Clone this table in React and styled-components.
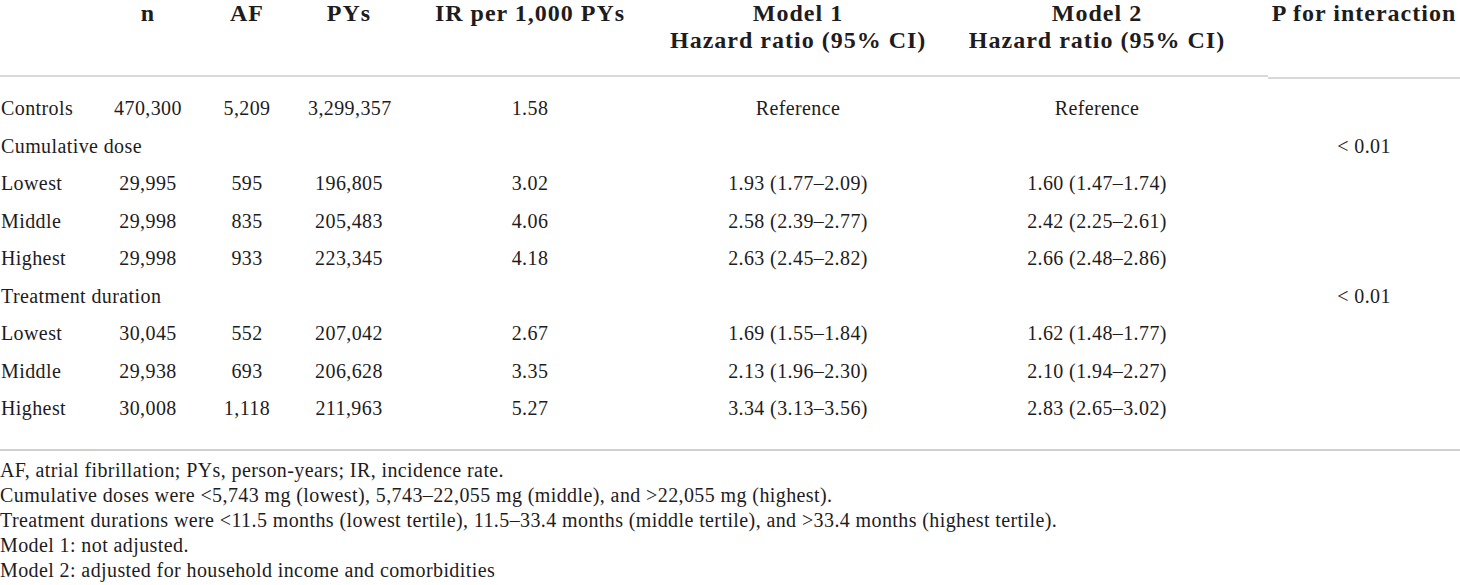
import React from 'react';
import styled, { createGlobalStyle } from 'styled-components';

const GlobalStyle = createGlobalStyle`
  html, body {
    margin: 0;
    padding: 0;
    background: #ffffff;
    overflow: hidden;
  }
  body {
    font-family: "Liberation Serif", "Times New Roman", serif;
    color: #1e1c1d;
  }
`

const COLS = '110px 76px 122px 82px 280px 256px 342px 192px';

const Table = styled.div`
  width: 1460px;
`
const HeadRow = styled.div`
  display: grid;
  grid-template-columns: ${COLS};
  height: 78px;
`
const HeadCell = styled.div`
  font-weight: 700;
  font-size: 24px;
  line-height: 27px;
  letter-spacing: 1px;
  text-align: center;
  white-space: nowrap;
  border-bottom: 2px solid #d9d9d9;
  margin-bottom: ${(p) => (p.$drop ? '-1px' : '1px')};
`
const Body = styled.div`
  padding: 12px 0 21px;
  border-bottom: 2px solid #cfcfcf;
`
const Row = styled.div`
  display: grid;
  grid-template-columns: ${COLS};
  height: 37.5px;
  align-items: center;
  font-size: 20px;
  letter-spacing: 0.4px;
`
const Label = styled.div`
  padding-left: 1px;
  white-space: nowrap;
  grid-column: ${(p) => (p.$wide ? '1 / 8' : 'auto')};
`
const Cell = styled.div`
  text-align: center;
  white-space: nowrap;
`
const Notes = styled.div`
  padding-top: 7px;
  font-size: 20px;
  line-height: 25.2px;
  letter-spacing: 0.4px;
`
const Note = styled.div`
  white-space: nowrap;
`

const rows = [
  { label: 'Controls', v: ['470,300', '5,209', '3,299,357', '1.58', 'Reference', 'Reference', ''] },
  { label: 'Cumulative dose', p: '< 0.01' },
  { label: 'Lowest', v: ['29,995', '595', '196,805', '3.02', '1.93 (1.77–2.09)', '1.60 (1.47–1.74)', ''] },
  { label: 'Middle', v: ['29,998', '835', '205,483', '4.06', '2.58 (2.39–2.77)', '2.42 (2.25–2.61)', ''] },
  { label: 'Highest', v: ['29,998', '933', '223,345', '4.18', '2.63 (2.45–2.82)', '2.66 (2.48–2.86)', ''] },
  { label: 'Treatment duration', p: '< 0.01' },
  { label: 'Lowest', v: ['30,045', '552', '207,042', '2.67', '1.69 (1.55–1.84)', '1.62 (1.48–1.77)', ''] },
  { label: 'Middle', v: ['29,938', '693', '206,628', '3.35', '2.13 (1.96–2.30)', '2.10 (1.94–2.27)', ''] },
  { label: 'Highest', v: ['30,008', '1,118', '211,963', '5.27', '3.34 (3.13–3.56)', '2.83 (2.65–3.02)', ''] },
]

const notes = [
  'AF, atrial fibrillation; PYs, person-years; IR, incidence rate.',
  'Cumulative doses were <5,743 mg (lowest), 5,743–22,055 mg (middle), and >22,055 mg (highest).',
  'Treatment durations were <11.5 months (lowest tertile), 11.5–33.4 months (middle tertile), and >33.4 months (highest tertile).',
  'Model 1: not adjusted.',
  'Model 2: adjusted for household income and comorbidities',
]

const App = () => {
  return (
    <Table>
      <GlobalStyle />
      <HeadRow>
        <HeadCell />
        <HeadCell>n</HeadCell>
        <HeadCell>AF</HeadCell>
        <HeadCell>PYs</HeadCell>
        <HeadCell>IR per 1,000 PYs</HeadCell>
        <HeadCell>Model 1<br />Hazard ratio (95% CI)</HeadCell>
        <HeadCell>Model 2<br />Hazard ratio (95% CI)</HeadCell>
        <HeadCell $drop>P for interaction</HeadCell>
      </HeadRow>

      <Body>
        {rows.map((r, i) => (
          <Row key={i}>
            {r.v ? (
              <>
                <Label>{r.label}</Label>
                {r.v.map((c, j) => <Cell key={j}>{c}</Cell>)}
              </>
            ) : (
              <>
                <Label $wide>{r.label}</Label>
                <Cell>{r.p}</Cell>
              </>
            )}
          </Row>
        ))}
      </Body>

      <Notes>
        {notes.map((n, i) => <Note key={i}>{n}</Note>)}
      </Notes>
    </Table>
  )
}

export default App;
